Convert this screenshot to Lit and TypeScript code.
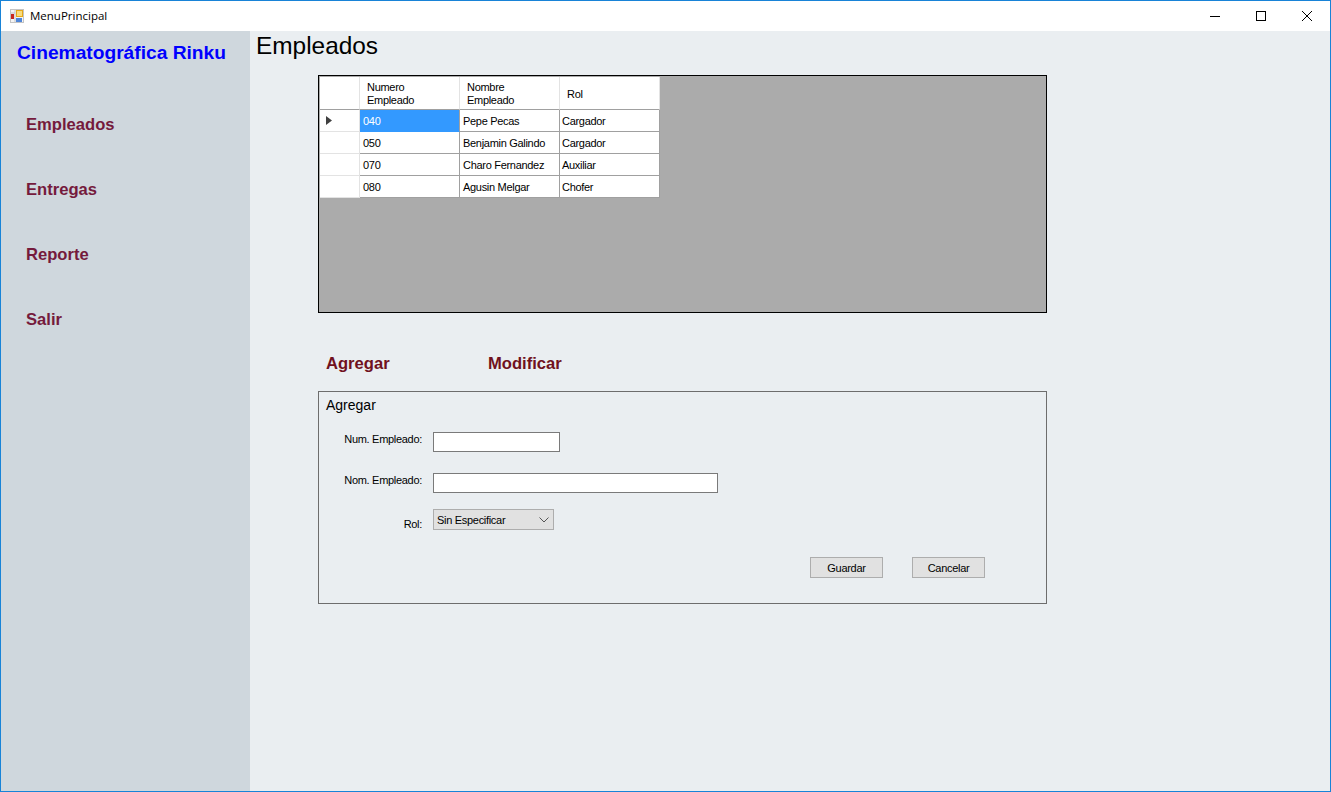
import { LitElement, html, css } from 'lit';
import { customElement } from 'lit/decorators.js';

const MENU = ['Empleados', 'Entregas', 'Reporte', 'Salir'];

const EMPLOYEES = [
  { num: '040', name: 'Pepe Pecas', role: 'Cargador' },
  { num: '050', name: 'Benjamin Galindo', role: 'Cargador' },
  { num: '070', name: 'Charo Fernandez', role: 'Auxiliar' },
  { num: '080', name: 'Agusin Melgar', role: 'Chofer' },
];

@customElement('app-root')
export class AppRoot extends LitElement {
  static styles = css`
    :host {
      display: block;
      height: 792px;
      font-family: "Liberation Sans", Arial, sans-serif;
      font-size: 11px;
      letter-spacing: -0.3px;
      color: #000;
    }

    * { box-sizing: border-box; }

    .window {
      height: 100%;
      display: flex;
      flex-direction: column;
      border: 1px solid #1883d7;
    }

    .titlebar {
      height: 30px;
      flex: none;
      display: flex;
      align-items: center;
      background: #fff;
      padding-bottom: 1px;
      letter-spacing: 0;
    }

    .app-icon { margin-left: 9px; }

    .title {
      margin-left: 6px;
      font-family: "Open Sans", sans-serif;
      font-size: 11.5px;
    }

    .controls {
      margin-left: auto;
      display: flex;
    }

    .controls span {
      width: 46px;
      height: 29px;
      display: flex;
      align-items: center;
      justify-content: center;
    }

    .body {
      flex: 1;
      display: flex;
      min-height: 0;
    }

    .sidebar {
      width: 249px;
      flex: none;
      background: #cfd7dd;
      padding: 11px 0 0 16px;
      letter-spacing: 0;
    }

    .brand {
      font-size: 19.2px;
      line-height: 22px;
      font-weight: bold;
      color: #0000ff;
      white-space: nowrap;
    }

    .menu {
      margin-top: 51px;
      padding-left: 9px;
      display: flex;
      flex-direction: column;
      gap: 45px;
    }

    .menu a {
      font-size: 16.6px;
      line-height: 20px;
      font-weight: bold;
      color: #751a3c;
    }

    .main {
      flex: 1;
      background: #eaeef1;
      padding-left: 5px;
    }

    h1 {
      margin: 1px 0 0 1px;
      font-size: 24.4px;
      line-height: 28px;
      font-weight: normal;
      letter-spacing: 0;
    }

    .content {
      width: 729px;
      margin: 15px 0 0 63px;
    }

    .grid-box {
      height: 238px;
      background: #ababab;
      border: 1px solid #000;
      padding: 1px;
    }

    .grid {
      display: grid;
      grid-template-columns: 40px 100px 100px 100px;
      grid-template-rows: 33px;
      grid-auto-rows: 22px;
      width: 340px;
      line-height: 13px;
    }

    .cell {
      background: #fff;
      border-right: 1px solid #a0a0a0;
      border-bottom: 1px solid #a0a0a0;
      display: flex;
      align-items: center;
      padding: 1px 0 0 3px;
      white-space: nowrap;
    }

    .role { padding-left: 2px; }

    .head {
      border-right: 1px solid #e3e3e3;
      border-bottom: 1px solid #a0a0a0;
      padding: 2px 0 0 7px;
      background: #fff;
      display: flex;
      align-items: center;
    }

    .row-head {
      background: #fff;
      border-right: 1px solid #e3e3e3;
      border-bottom: 1px solid #e3e3e3;
      display: flex;
      align-items: center;
      padding-left: 6px;
    }

    .selected {
      background: #3399ff;
      color: #fff;
      border-bottom-color: #3399ff;
    }

    .actions {
      display: flex;
      margin: 41px 0 0 8px;
      height: 20px;
      letter-spacing: 0;
    }

    .actions a {
      width: 162px;
      font-size: 16.6px;
      line-height: 20px;
      font-weight: bold;
      color: #701120;
    }

    .panel {
      height: 213px;
      margin-top: 17px;
      border: 1px solid #6d6d6d;
      padding: 4px 0 0 7px;
    }

    .panel-title {
      font-size: 14px;
      line-height: 18px;
      letter-spacing: 0;
    }

    .field {
      display: flex;
      align-items: center;
    }

    .first { margin-top: 18px; }
    .second { margin-top: 21px; }
    .third { margin-top: 16px; }

    label {
      width: 96px;
      flex: none;
      text-align: right;
      margin: -6px 11px 0 0;
      white-space: nowrap;
    }

    .third label { margin-top: 8px; }

    .input {
      height: 20px;
      background: #fff;
      border: 1px solid #7a7a7a;
    }

    .short { width: 127px; }
    .long { width: 285px; }

    .select {
      width: 121px;
      height: 21px;
      background: #e1e1e1;
      border: 1px solid #adadad;
      display: flex;
      align-items: center;
      justify-content: space-between;
      padding: 0 4px 0 3px;
    }

    .buttons {
      display: flex;
      gap: 29px;
      margin: 27px 0 0 484px;
    }

    .btn {
      width: 73px;
      height: 21px;
      background: #e1e1e1;
      border: 1px solid #adadad;
      display: flex;
      align-items: center;
      justify-content: center;
    }
  `;

  renderAppIcon() {
    return html`<svg class="app-icon" width="14" height="14" viewBox="0 0 14 14">
      <rect x="0.5" y="0.5" width="13" height="13" fill="#f4f4f4" stroke="#c4c4c4"></rect>
      <path d="M5 0V14M0 4H5" stroke="#c4c4c4" fill="none"></path>
      <rect x="1" y="5" width="3" height="5" fill="#c8281e"></rect>
      <rect x="6" y="1" width="7" height="7" fill="#e6a817"></rect>
      <rect x="7" y="2" width="5" height="5" fill="#f9dc7c"></rect>
      <rect x="6" y="9" width="6" height="4" fill="#4f86d9"></rect>
    </svg>`;
  }

  renderControls() {
    return html`<div class="controls">
      <span><svg width="10" height="10"><path d="M0 5.5H10" stroke="#000" fill="none"></path></svg></span>
      <span><svg width="10" height="10"><rect x="0.5" y="0.5" width="9" height="9" stroke="#000" fill="none"></rect></svg></span>
      <span><svg width="10" height="10"><path d="M0 0L10 10M10 0L0 10" stroke="#000" fill="none"></path></svg></span>
    </div>`;
  }

  renderGrid() {
    return html`<div class="grid-box">
      <div class="grid">
        <div class="head"></div>
        <div class="head">Numero<br />Empleado</div>
        <div class="head">Nombre<br />Empleado</div>
        <div class="head">Rol</div>
        ${EMPLOYEES.map((emp, i) => html`
          <div class="row-head">
            ${i === 0 ? html`<svg width="6" height="9"><path d="M0 0L6 4.5L0 9Z" fill="#404040"></path></svg>` : ''}
          </div>
          <div class="cell ${i === 0 ? 'selected' : ''}">${emp.num}</div>
          <div class="cell">${emp.name}</div>
          <div class="cell role">${emp.role}</div>
        `)}
      </div>
    </div>`;
  }

  renderForm() {
    return html`<div class="panel">
      <div class="panel-title">Agregar</div>
      <div class="field first">
        <label>Num. Empleado:</label>
        <div class="input short"></div>
      </div>
      <div class="field second">
        <label>Nom. Empleado:</label>
        <div class="input long"></div>
      </div>
      <div class="field third">
        <label>Rol:</label>
        <div class="select">
          Sin Especificar
          <svg width="10" height="6"><path d="M0.5 0.5L5 5L9.5 0.5" stroke="#555" fill="none"></path></svg>
        </div>
      </div>
      <div class="buttons">
        <div class="btn">Guardar</div>
        <div class="btn">Cancelar</div>
      </div>
    </div>`;
  }

  render() {
    return html`
      <div class="window">
        <div class="titlebar">
          ${this.renderAppIcon()}
          <span class="title">MenuPrincipal</span>
          ${this.renderControls()}
        </div>
        <div class="body">
          <nav class="sidebar">
            <div class="brand">Cinematográfica Rinku</div>
            <div class="menu">
              ${MENU.map((item) => html`<a>${item}</a>`)}
            </div>
          </nav>
          <main class="main">
            <h1>Empleados</h1>
            <div class="content">
              ${this.renderGrid()}
              <div class="actions">
                <a>Agregar</a>
                <a>Modificar</a>
              </div>
              ${this.renderForm()}
            </div>
          </main>
        </div>
      </div>
    `;
  }
}
